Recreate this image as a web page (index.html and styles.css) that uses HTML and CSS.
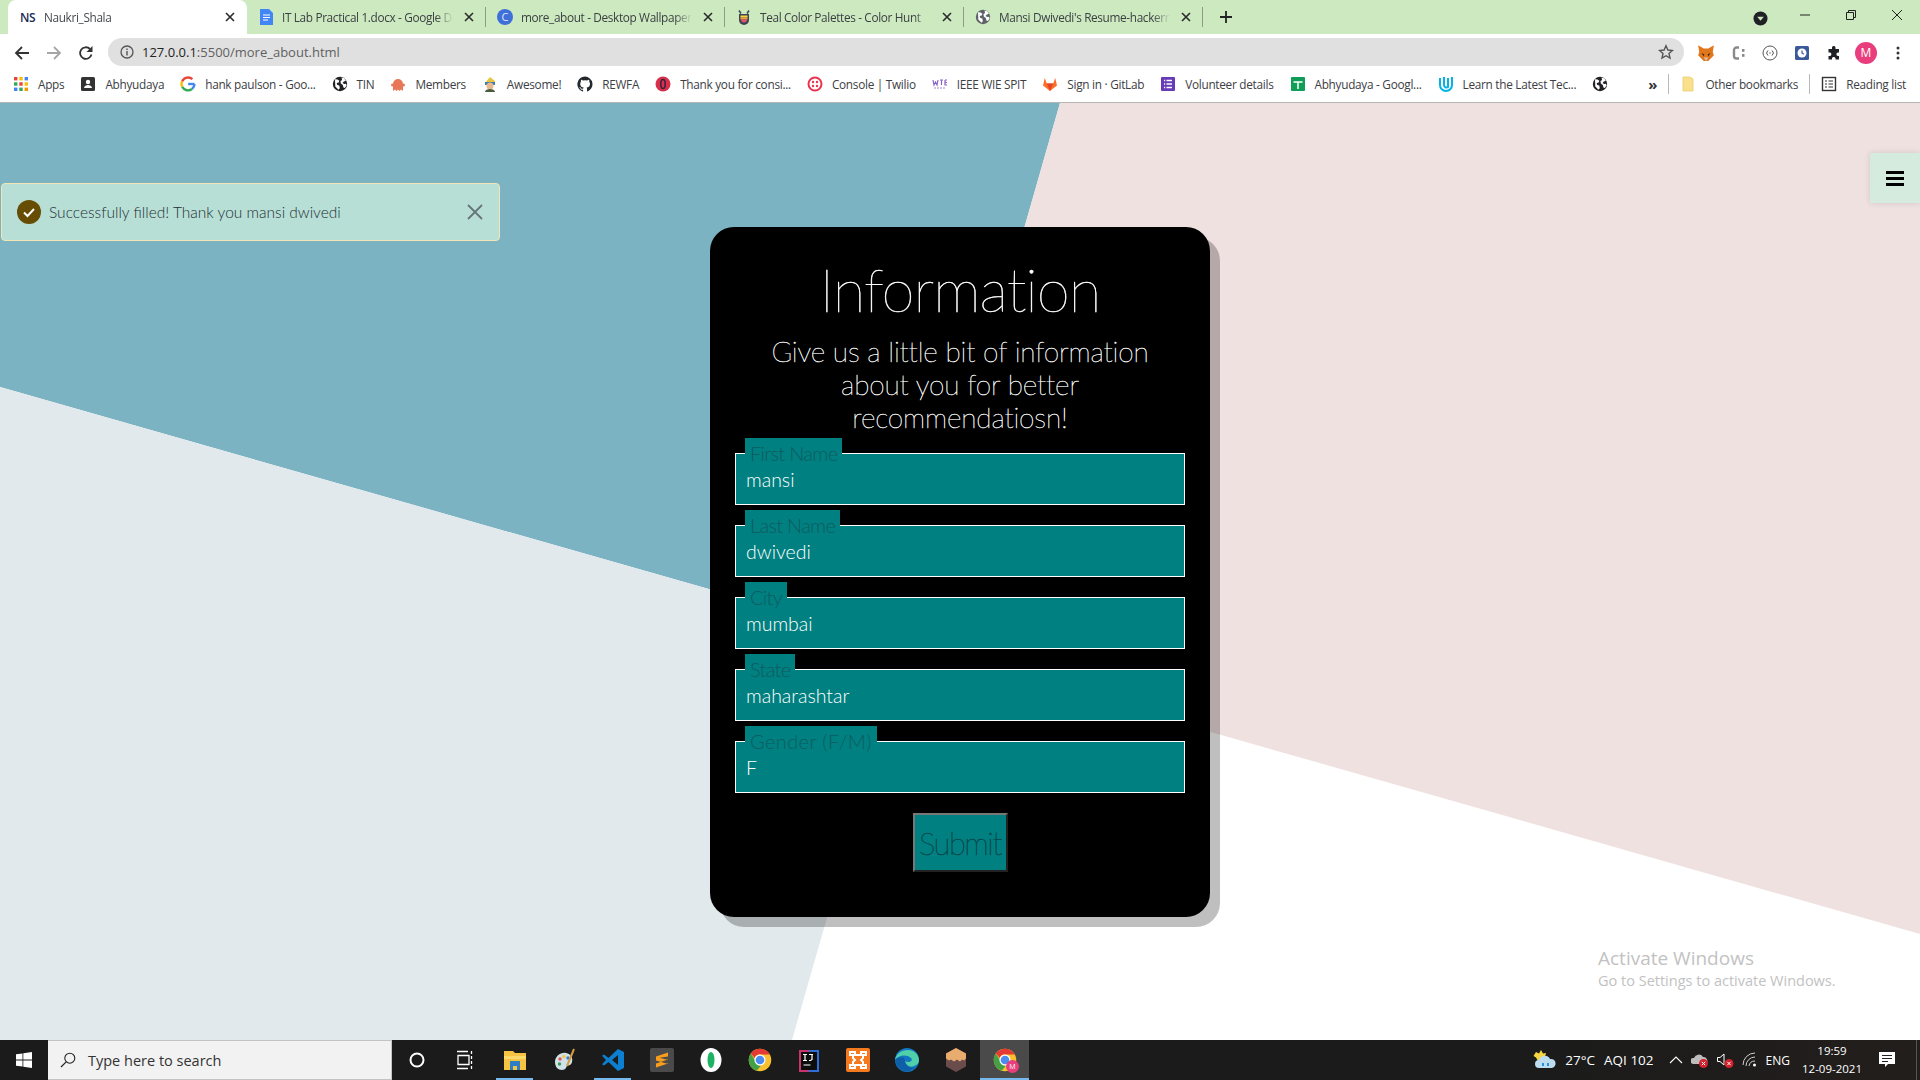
FILE: index.html
```html
<!DOCTYPE html>
<html lang="en">
<head>
  <meta charset="UTF-8">
  <meta name="viewport" content="width=device-width, initial-scale=1.0">
  <title>Naukri_Shala</title>
  <link rel="stylesheet" href="styles.css">
</head>
<body>
  <!-- shared icons -->
  <svg class="sprite" aria-hidden="true">
    <symbol id="i-close" viewBox="0 0 16 16"><path d="M4 4l8 8M12 4l-8 8" fill="none" stroke="currentColor" stroke-width="1.6"/></symbol>
    <symbol id="i-globe" viewBox="0 0 16 16"><circle cx="8" cy="8" r="7.2" fill="currentColor"/><path d="M3 3.2l2.6.3 1.7 1.3-.6 1.7-2 .6.6 2 2 .5.5 2.6-1.3 1.6-3.2-3.4zM9.5 1.6l2.6.6 1.8 2.6-2 .6-1.4 1.5 1.8 1.2 1.8-.3.5 1.6-1.7 2.6-1.5-.4-.6-2.5-2-1.7-.3-2.4 1.6-1z" fill="#fff"/></symbol>
    <symbol id="i-chrome" viewBox="0 0 32 32">
      <circle cx="16" cy="16" r="15" fill="#fbc02d"/>
      <path d="M16 1a15 15 0 0 1 13 7.5H16a7.5 7.5 0 0 0-7 4.7L3.900 7.200A15 15 0 0 1 16 1z" fill="#e53935"/>
      <path d="M1 16a15 15 0 0 1 2.900-8.800L10 17.500a7.500 7.500 0 0 0 7.200 6L11.500 30.300A15 15 0 0 1 1 16z" fill="#43a047"/>
      <circle cx="16" cy="16" r="7.400" fill="#fff"/><circle cx="16" cy="16" r="5.800" fill="#4a8cf0"/>
    </symbol>
  </svg>

  <div class="chrome">
    <div class="tabstrip">
      <div class="tab tab-active">
        <span class="fav-ns">NS</span>
        <span class="tab-title">Naukri_Shala</span>
        <svg class="tab-close"><use href="#i-close"/></svg>
      </div>
      <div class="tab">
        <svg class="fav" viewBox="0 0 16 16"><path d="M2 0h9l4 4v12H2z" fill="#4285f4"/><path d="M5 6h7M5 8.500h7M5 11h5" stroke="#fff" stroke-width="1.200"/></svg>
        <span class="tab-title">IT Lab Practical 1.docx - Google Docs</span>
        <svg class="tab-close"><use href="#i-close"/></svg>
      </div>
      <div class="tab">
        <span class="fav-canva">C</span>
        <span class="tab-title">more_about - Desktop Wallpaper</span>
        <svg class="tab-close"><use href="#i-close"/></svg>
      </div>
      <div class="tab">
        <svg class="fav" viewBox="0 0 16 16"><path d="M3 5h10v6a5 5 0 0 1-10 0z" fill="#3d4450"/><path d="M4.500 6.500h7v2h-7z" fill="#f6d743"/><path d="M4.500 8.500h7v2h-7z" fill="#f59a3c"/><path d="M5 10.500h6a3 3 0 0 1-6 0z" fill="#e0566f"/><path d="M3 1.500l2 3M13 1.500l-2 3" stroke="#3d4450" stroke-width="1.500"/></svg>
        <span class="tab-title">Teal Color Palettes - Color Hunt</span>
        <svg class="tab-close"><use href="#i-close"/></svg>
      </div>
      <div class="tab">
        <svg class="fav fav-gray"><use href="#i-globe"/></svg>
        <span class="tab-title">Mansi Dwivedi's Resume-hackerrank</span>
        <svg class="tab-close"><use href="#i-close"/></svg>
      </div>
      <svg class="new-tab" viewBox="0 0 14 14"><path d="M7 1v12M1 7h12" stroke="#222" stroke-width="1.800"/></svg>
      <div class="win-controls">
        <svg class="tab-search" viewBox="0 0 16 16"><circle cx="8" cy="8" r="7.500" fill="#202124"/><path d="M4.500 6h7L8 10.500z" fill="#cde9c0"/></svg>
        <svg class="win-btn" viewBox="0 0 12 12"><path d="M1 6h10" stroke="#222"/></svg>
        <svg class="win-btn" viewBox="0 0 12 12"><path d="M1.500 3.500h7v7h-7zM3.500 3.500v-2h7v7h-2" fill="none" stroke="#222"/></svg>
        <svg class="win-btn" viewBox="0 0 12 12"><path d="M1 1l10 10M11 1L1 11" stroke="#222"/></svg>
      </div>
    </div>

    <div class="toolbar">
      <svg class="nav-icon" viewBox="0 0 16 16"><path d="M15 8H2M8 2L2 8l6 6" fill="none" stroke="#333" stroke-width="1.800"/></svg>
      <svg class="nav-icon" viewBox="0 0 16 16"><path d="M1 8h13M8 2l6 6-6 6" fill="none" stroke="#a6a6a6" stroke-width="1.800"/></svg>
      <svg class="nav-icon" viewBox="0 0 16 16"><path d="M13.500 9.500A5.800 5.800 0 1 1 12 4" fill="none" stroke="#333" stroke-width="1.800"/><path d="M14.500 1v6h-6z" fill="#333"/></svg>
      <div class="omnibox">
        <svg class="info-icon" viewBox="0 0 14 14"><circle cx="7" cy="7" r="6" fill="none" stroke="#555" stroke-width="1.300"/><path d="M7 6v4.500M7 3.500v1.500" stroke="#555" stroke-width="1.400"/></svg>
        <span class="url"><b>127.0.0.1</b>:5500/more_about.html</span>
        <svg class="star" viewBox="0 0 16 16"><path d="M8 1.800l1.900 4.200 4.500.5-3.400 3 1 4.500L8 11.700 4 14l1-4.500-3.400-3 4.500-.5z" fill="none" stroke="#555" stroke-width="1.400"/></svg>
      </div>
      <div class="extensions">
        <svg class="ext ext-fox" viewBox="0 0 16 16"><path d="M1 1l5 3h4l5-3-1 6 1 3-3 3-2 2H6l-2-2-3-3 1-3z" fill="#e2761b"/><path d="M4 8l2.500 1L6 11zM12 8L9.500 9l.5 2z" fill="#3d2b1f"/><path d="M6 12h4l-2 3z" fill="#d7c1b3"/></svg>
        <svg class="ext" viewBox="0 0 16 16"><path d="M9 2.500H6.500a2.500 2.500 0 0 0-2.500 2.500v6a2.500 2.500 0 0 0 2.500 2.500H9" fill="none" stroke="#8a8a8a" stroke-width="2.400"/><rect x="12" y="4" width="2.500" height="2.800" fill="#8a8a8a"/><rect x="12" y="9" width="2.500" height="2.800" fill="#8a8a8a"/></svg>
        <svg class="ext" viewBox="0 0 16 16"><circle cx="8" cy="8" r="7" fill="none" stroke="#555"/><path d="M6 5.500L4.500 8 6 10.500M10 5.500L11.500 8 10 10.500" fill="none" stroke="#555"/><circle cx="8" cy="8" r=".7" fill="#555"/></svg>
        <svg class="ext" viewBox="0 0 16 16"><rect x="1" y="1" width="14" height="14" rx="1.500" fill="#3b5a9a"/><circle cx="8" cy="8" r="4.500" fill="#fff"/><path d="M8 5.500V8l1.800 1.200" fill="none" stroke="#3b5a9a" stroke-width="1.200"/></svg>
        <svg class="ext" viewBox="0 0 16 16"><path d="M6 2.500a1.800 1.800 0 0 1 3.500 0V4H13v3.500h-1.200a1.800 1.800 0 0 0 0 3.500H13v3.500H9.500v-1.200a1.800 1.800 0 0 0-3.500 0v1.200H2.500V11H4a1.800 1.800 0 0 0 0-3.500H2.500V4H6z" fill="#202124"/></svg>
        <span class="avatar">M</span>
        <svg class="ext ext-more" viewBox="0 0 16 16"><circle cx="8" cy="3" r="1.500" fill="#333"/><circle cx="8" cy="8" r="1.500" fill="#333"/><circle cx="8" cy="13" r="1.500" fill="#333"/></svg>
      </div>
    </div>

    <div class="bookmarks">
      <a class="bm bm-apps"><svg class="bm-icon" viewBox="0 0 16 16"><g><rect x="1" y="1" width="3.400" height="3.400" fill="#ea4335"/><rect x="6.300" y="1" width="3.400" height="3.400" fill="#fbbc04"/><rect x="11.600" y="1" width="3.400" height="3.400" fill="#4285f4"/><rect x="1" y="6.300" width="3.400" height="3.400" fill="#34a853"/><rect x="6.300" y="6.300" width="3.400" height="3.400" fill="#ea4335"/><rect x="11.600" y="6.300" width="3.400" height="3.400" fill="#fbbc04"/><rect x="1" y="11.600" width="3.400" height="3.400" fill="#4285f4"/><rect x="6.300" y="11.600" width="3.400" height="3.400" fill="#34a853"/><rect x="11.600" y="11.600" width="3.400" height="3.400" fill="#f29900"/></g></svg>Apps</a>
      <a class="bm"><svg class="bm-icon" viewBox="0 0 16 16"><rect x="1" y="1" width="14" height="14" rx="1.500" fill="#333"/><circle cx="8" cy="6" r="2.200" fill="#fff"/><path d="M4 12c.5-4 7.500-4 8 0z" fill="#fff"/></svg>Abhyudaya</a>
      <a class="bm"><svg class="bm-icon" viewBox="0 0 16 16"><path d="M14.500 8H8.200" stroke="#4285f4" stroke-width="2.400" fill="none"/><path d="M14.500 8a6.500 6.500 0 0 1-2.500 5" stroke="#4285f4" stroke-width="2.400" fill="none"/><path d="M12 13a6.500 6.500 0 0 1-9.800-2.200" stroke="#34a853" stroke-width="2.400" fill="none"/><path d="M2.200 10.800a6.500 6.500 0 0 1 0-5.600" stroke="#fbbc04" stroke-width="2.400" fill="none"/><path d="M2.200 5.200A6.500 6.500 0 0 1 12.400 3.200" stroke="#ea4335" stroke-width="2.400" fill="none"/></svg>hank paulson - Goo...</a>
      <a class="bm"><svg class="bm-icon bm-dark"><use href="#i-globe"/></svg>TIN</a>
      <a class="bm"><svg class="bm-icon" viewBox="0 0 16 16"><path d="M3 15V8a5 5 0 0 1 10 0v7l-2-1.500L9.500 15 8 13.500 6.500 15 5 13.500z" fill="#e8775a"/><circle cx="2.500" cy="9" r="1.500" fill="#e8775a"/><circle cx="13.500" cy="9" r="1.500" fill="#e8775a"/></svg>Members</a>
      <a class="bm"><svg class="bm-icon" viewBox="0 0 16 16"><path d="M3 7l5-6 5 4v3H3z" fill="#e7c53c"/><rect x="3" y="6" width="10" height="3" fill="#3d7fb5"/><circle cx="8" cy="10" r="3.500" fill="#e7b98c"/><path d="M3 16c0-4 10-4 10 0z" fill="#4b5a3a"/></svg>Awesome!</a>
      <a class="bm"><svg class="bm-icon" viewBox="0 0 16 16"><path d="M8 .5a7.700 7.700 0 0 0-2.400 15c.4.100.5-.2.500-.4v-1.400c-2.100.500-2.600-1-2.600-1-.4-.900-.9-1.100-.9-1.100-.7-.500.100-.500.100-.500.800.100 1.200.800 1.200.800.700 1.200 1.800.900 2.300.700.100-.5.300-.9.500-1.100-1.700-.2-3.500-.900-3.500-3.800 0-.800.300-1.500.8-2-.1-.2-.3-1 .1-2 0 0 .6-.2 2.100.8a7.300 7.300 0 0 1 3.800 0c1.500-1 2.100-.8 2.100-.8.400 1 .2 1.800.1 2 .5.500.8 1.200.8 2 0 2.900-1.800 3.600-3.500 3.800.3.200.5.700.5 1.400v2.100c0 .2.100.500.500.400A7.700 7.700 0 0 0 8 .5z" fill="#24292e"/></svg>REWFA</a>
      <a class="bm"><svg class="bm-icon" viewBox="0 0 16 16"><circle cx="8" cy="8" r="7.500" fill="#d8304a"/><ellipse cx="8" cy="8" rx="2.200" ry="4.500" fill="none" stroke="#3a2340" stroke-width="1.600"/></svg>Thank you for consi...</a>
      <a class="bm"><svg class="bm-icon" viewBox="0 0 16 16"><circle cx="8" cy="8" r="6.500" fill="none" stroke="#e8344e" stroke-width="2"/><circle cx="6" cy="6" r="1.200" fill="#e8344e"/><circle cx="10" cy="6" r="1.200" fill="#e8344e"/><circle cx="6" cy="10" r="1.200" fill="#e8344e"/><circle cx="10" cy="10" r="1.200" fill="#e8344e"/></svg>Console | Twilio</a>
      <a class="bm"><svg class="bm-icon" viewBox="0 0 16 16"><path d="M1 4l1 5 1.500-3L5 9l1-5M8 4h3M9.500 4v5M13 4v5h2M13 6.500h2M13 4h2" fill="none" stroke="#8a63c9" stroke-width="1.200"/><path d="M2 12h12" stroke="#c5b3e3" stroke-width="1.500" stroke-dasharray="2 1"/></svg>IEEE WIE SPIT</a>
      <a class="bm"><svg class="bm-icon" viewBox="0 0 16 16"><path d="M8 15L1 9.500 2.800 2l2 5.500h6.400l2-5.500L15 9.500z" fill="#fc6d26"/><path d="M8 15L4.800 7.500h6.400z" fill="#e24329"/></svg>Sign in · GitLab</a>
      <a class="bm"><svg class="bm-icon" viewBox="0 0 16 16"><rect x="1" y="1" width="14" height="14" rx="1" fill="#673ab7"/><path d="M6.500 4.500h5.500M6.500 8h5.500M6.500 11.500h5.500M4 4.500h1.200M4 8h1.200M4 11.500h1.200" stroke="#fff" stroke-width="1.300"/></svg>Volunteer details</a>
      <a class="bm"><svg class="bm-icon" viewBox="0 0 16 16"><rect x="1" y="1" width="14" height="14" rx="1" fill="#0f9d58"/><path d="M3.500 6h9M8 6v7" stroke="#fff" stroke-width="1.500"/></svg>Abhyudaya - Googl...</a>
      <a class="bm"><svg class="bm-icon" viewBox="0 0 16 16"><path d="M2 2v7a6 6 0 0 0 12 0V1" fill="none" stroke="#02b3e4" stroke-width="2"/><path d="M6 1v8a2.500 2.500 0 0 0 4 2V2" fill="none" stroke="#02b3e4" stroke-width="2"/></svg>Learn the Latest Tec...</a>
      <a class="bm bm-globe"><svg class="bm-icon bm-dark"><use href="#i-globe"/></svg></a>
      <span class="bm-more">»</span>
      <i class="bm-sep"></i>
      <a class="bm bm-other"><svg class="bm-icon" viewBox="0 0 16 16"><path d="M3 1h7l3 2v12H3z" fill="#fbe08c" stroke="#e8c766" stroke-width=".7"/></svg>Other bookmarks</a>
      <i class="bm-sep"></i>
      <a class="bm bm-reading"><svg class="bm-icon" viewBox="0 0 16 16"><rect x="1.500" y="1.500" width="13" height="13" fill="none" stroke="#333" stroke-width="1.400"/><path d="M4 5h2M7.500 5H12M4 8h2M7.500 8H12M4 11h2M7.500 11H12" stroke="#333" stroke-width="1.200"/></svg>Reading list</a>
    </div>
  </div>

  <main class="page">
    <svg class="backdrop" viewBox="0 0 1920 937" preserveAspectRatio="none" aria-hidden="true">
      <polygon points="0,0 1060,0 905,542 0,284" fill="#7cb3c3"/>
      <polygon points="1060,0 1920,0 1920,831 905,542" fill="#f0e1e1"/>
      <polygon points="0,284 905,542 792,937 0,937" fill="#e2e9ec"/>
    </svg>

    <div class="toast">
      <svg class="toast-check" viewBox="0 0 24 24"><circle cx="12" cy="12" r="12" fill="#664d03"/><path d="M7 12.500l3.500 3.500L17 9" fill="none" stroke="#fff" stroke-width="2"/></svg>
      <span class="toast-text">Successfully filled! Thank you mansi dwivedi</span>
      <svg class="toast-close" viewBox="0 0 16 16"><path d="M1 1l14 14M15 1L1 15" stroke="#66757a" stroke-width="1.800"/></svg>
    </div>

    <button class="menu-btn" aria-label="Menu"><span></span><span></span><span></span></button>

    <section class="card">
      <h1>Information</h1>
      <h2>Give us a little bit of information about you for better recommendatiosn!</h2>
      <form>
        <fieldset><legend>First Name</legend><input type="text" value="mansi"></fieldset>
        <fieldset><legend>Last Name</legend><input type="text" value="dwivedi"></fieldset>
        <fieldset><legend>City</legend><input type="text" value="mumbai"></fieldset>
        <fieldset><legend>State</legend><input type="text" value="maharashtar"></fieldset>
        <fieldset><legend class="legend-wide">Gender (F/M)</legend><input type="text" value="F"></fieldset>
        <button class="submit" type="button">Submit</button>
      </form>
    </section>

    <div class="activate">
      <div class="activate-title">Activate Windows</div>
      <div class="activate-sub">Go to Settings to activate Windows.</div>
    </div>
  </main>

  <footer class="taskbar">
    <div class="start"><svg viewBox="0 0 16 16" width="16" height="16"><path d="M0 2.300l6.500-.9v6.200H0zM7.300 1.300L16 0v7.600H7.300zM0 8.400h6.500v6.200L0 13.700zM7.300 8.400H16V16l-8.700-1.300z" fill="#fff"/></svg></div>
    <div class="search">
      <svg viewBox="0 0 16 16" width="16" height="16"><circle cx="9.800" cy="6.200" r="5" fill="none" stroke="#222" stroke-width="1.100"/><path d="M6.200 9.800L1 15" stroke="#222" stroke-width="1.200"/></svg>
      <span>Type here to search</span>
    </div>
    <div class="task-icons">
      <div class="task"><svg viewBox="0 0 24 24"><circle cx="12" cy="12" r="6.500" fill="none" stroke="#fff" stroke-width="2"/></svg></div>
      <div class="task"><svg viewBox="0 0 24 24"><path d="M3 3.500h11M3 20.500h11M4 7.500h11v9H4zM17.500 3v3M17.500 8v3M17.500 13v3M17.500 18v3" fill="none" stroke="#fff" stroke-width="1.300"/></svg></div>
      <div class="task task-run"><svg viewBox="0 0 24 24"><path d="M1 3h9l2 2h11v17H1z" fill="#f6c343"/><path d="M1 8h22v3H1z" fill="#fbd96b"/><path d="M7 13h10v9h-3v-4h-4v4H7z" fill="#2c7fc4"/></svg></div>
      <div class="task"><svg viewBox="0 0 24 24"><path d="M3 14c0-6 6-10 11-9 5 1 7 5 6 9s-4 3-5 4-1 4-5 4-7-3-7-8z" fill="#cfe3ea"/><circle cx="8" cy="11" r="1.700" fill="#e8534a"/><circle cx="12" cy="8.500" r="1.700" fill="#f6c343"/><circle cx="7.500" cy="16" r="1.700" fill="#3a9a5a"/><circle cx="16" cy="10" r="1.700" fill="#3a7fd0"/><path d="M22 1l-7 17" stroke="#d69a45" stroke-width="2"/></svg></div>
      <div class="task task-run"><svg viewBox="0 0 24 24"><path d="M17 1l6 3v16l-6 3L7.500 14 3 17.500 1 16.200 5 12 1 7.800 3 6.500 7.500 10z" fill="#0d7fd1"/><path d="M17 7l-6 5 6 5z" fill="#1c1c1c"/></svg></div>
      <div class="task"><svg viewBox="0 0 24 24"><rect width="24" height="24" rx="2" fill="#4a4a4a"/><path d="M18 4.500L6 8.500v4l12 3.500v-4L9.500 9.700 18 8.500zM6 15.500l12-4v4l-12 4z" fill="#f89d1c"/></svg></div>
      <div class="task"><svg viewBox="0 0 24 24"><ellipse cx="12" cy="12" rx="10.500" ry="12" fill="#fff"/><ellipse cx="12" cy="12" rx="3.500" ry="8" fill="#1eb264"/></svg></div>
      <div class="task"><svg><use href="#i-chrome"/></svg></div>
      <div class="task"><svg viewBox="0 0 24 24"><rect x="2" y="2" width="20" height="24" fill="#2c6fd8"/><rect x="2" y="2" width="10" height="24" fill="#c7356f"/><rect x="4" y="4" width="16" height="18" fill="#0d0d0d"/><path d="M6 6.500h4M8 6.500v6M6 12.500h4M12 6.500h4M15 6.500v5l-1.500 1H12M6.500 17h7" fill="none" stroke="#fff" stroke-width="1.200"/></svg></div>
      <div class="task"><svg viewBox="0 0 24 24"><rect width="24" height="24" rx="2" fill="#f5791f"/><path d="M7 7h10v3l-2 2 2 2v3H7v-3l2-2-2-2zM4 4h5v3H4zM15 4h5v3h-5zM4 17h5v3H4zM15 17h5v3h-5z" fill="none" stroke="#fff" stroke-width="2"/></svg></div>
      <div class="task"><svg viewBox="0 0 24 24"><circle cx="12" cy="12" r="12" fill="#1276c4"/><path d="M24 13C24 6 19 2 13 2 6 2 1 6 0 12c3-5 12-6 16-2 2 2 0 4-3 4-2 0-3-1-3-2 0 5 5 8 9 6 3-1 5-3 5-5z" fill="#4fd0a8"/><path d="M10 12c0 5 4 9 10 7-3 3-7 5-10 4-6-1-9-6-10-11 3-3 9-4 10 0z" fill="#0f5fa8"/></svg></div>
      <div class="task"><svg viewBox="0 0 24 24"><path d="M12 0l10 5.500v13L12 24 2 18.500v-13z" fill="#6a4c4c"/><path d="M12 0l10 5.500v5l-2 2-2-1-2 2-3-2-3 2-3-2-2 1-3-2v-5z" fill="#e8ad6e"/></svg></div>
      <div class="task task-active"><svg><use href="#i-chrome"/></svg><span class="task-badge">M</span></div>
    </div>
    <div class="tray">
      <svg class="tray-weather" viewBox="0 0 24 24"><path d="M3 4l3 1.500L8 2l2 3.500 3-.5-1 4-7 4-2-3.500L.5 8z" fill="#f6d743"/><path d="M6 20a4 4 0 0 1 0-8 6 6 0 0 1 11-1 4.500 4.500 0 0 1 2 9z" fill="#bcdcf0"/><path d="M10 15v3M15 15v3" stroke="#2f8fd6" stroke-width="2"/></svg>
      <span class="tray-temp">27°C</span>
      <span class="tray-aqi">AQI 102</span>
      <svg class="tray-chev" viewBox="0 0 14 8"><path d="M1 7l6-6 6 6" fill="none" stroke="#fff" stroke-width="1.100"/></svg>
      <span class="tray-ic">
        <svg viewBox="0 0 18 18"><path d="M2 13a3 3 0 0 1 1-6 5 5 0 0 1 9-1 4 4 0 0 1 3 7z" fill="#bdbdbd"/><circle cx="12.500" cy="12.500" r="4.500" fill="#d3202d"/><path d="M10.800 10.800l3.400 3.400M14.200 10.800l-3.400 3.400" stroke="#fff"/></svg>
      </span>
      <span class="tray-ic">
        <svg viewBox="0 0 18 18"><path d="M1.500 6.500h2.500L8 3v11L4 10.500H1.500z" fill="none" stroke="#fff"/><circle cx="13" cy="12.500" r="4.500" fill="#d3202d"/><path d="M11.300 10.800l3.400 3.400M14.700 10.800l-3.400 3.400" stroke="#fff"/></svg>
      </span>
      <span class="tray-ic">
        <svg viewBox="0 0 18 18"><path d="M2 14A12 12 0 0 1 14 2M5 15A9 9 0 0 1 14 6M8 15a6 6 0 0 1 6-5" fill="none" stroke="#cfcfcf"/><circle cx="13.500" cy="14" r="1.500" fill="#fff"/></svg>
      </span>
      <span class="tray-lang">ENG</span>
      <div class="clock"><span>19:59</span><span>12-09-2021</span></div>
      <svg class="tray-notify" viewBox="0 0 18 18"><path d="M1 1h16v12h-7l-3 3v-3H1z" fill="#fff"/><path d="M4 4.500h10M4 7.500h10M4 10.500h6" stroke="#222"/></svg>
      <i class="tray-edge"></i>
    </div>
  </footer>
</body>
</html>
```

FILE: styles.css
```css
* {
  box-sizing: border-box;
}
html, body {
  margin: 0;
  height: 100%;
}
body {
  width: 1920px;
  height: 1080px;
  overflow: hidden;
  display: flex;
  flex-direction: column;
  font-family: "Open Sans", "Noto Sans", sans-serif;
  background: #fff;
}
.sprite {
  display: none;
}

/* browser top */
.chrome {
  flex: none;
  height: 103px;
  background: #fff;
  border-bottom: 1px solid #b5b5b5;
}
.tabstrip {
  height: 34px;
  padding-left: 8px;
  background: #cde9c0;
  display: flex;
  align-items: stretch;
}
.tab {
  width: 239px;
  padding: 0 9px 0 11px;
  display: flex;
  align-items: center;
  gap: 8px;
  position: relative;
  font-size: 11.8px;
  color: #3c4043;
}
.tab::after {
  content: "";
  position: absolute;
  right: 0;
  top: 7px;
  height: 20px;
  width: 1px;
  background: #8d9c86;
}
.tab-active {
  background: #fff;
  border-radius: 8px 8px 0 0;
  padding-left: 12px;
  color: #45474d;
}
.tab-active::after {
  display: none;
}
.tab-title {
  flex: 1;
  min-width: 0;
  white-space: nowrap;
  overflow: hidden;
  letter-spacing: -0.35px;
  -webkit-mask-image: linear-gradient(to right, #000 90%, transparent);
  mask-image: linear-gradient(to right, #000 90%, transparent);
}
.tab-close {
  flex: none;
  width: 16px;
  height: 16px;
  color: #2a2a2a;
}
.fav {
  flex: none;
  width: 16px;
  height: 16px;
}
.fav-gray {
  color: #5f6368;
}
.fav-ns {
  flex: none;
  width: 16px;
  font-size: 12px;
  font-weight: 600;
  color: #1c2a56;
  letter-spacing: -0.5px;
}
.fav-canva {
  flex: none;
  width: 16px;
  height: 16px;
  border-radius: 50%;
  background: #3f6fd8;
  color: #dfe9ff;
  font-size: 11px;
  line-height: 16px;
  text-align: center;
}
.new-tab {
  width: 14px;
  height: 14px;
  margin: 10px 0 0 16px;
}
.win-controls {
  margin-left: auto;
  display: flex;
  align-items: center;
}
.tab-search {
  width: 15px;
  height: 15px;
  margin: 2px 31px 0 0;
}
.win-btn {
  width: 12px;
  height: 12px;
  margin-right: 34px;
  margin-top: -5px;
}
.win-btn:last-child {
  margin-right: 17px;
}

.toolbar {
  height: 37px;
  display: flex;
  align-items: center;
  padding-left: 14px;
}
.nav-icon {
  width: 16px;
  height: 16px;
  margin-right: 16px;
}
.omnibox {
  width: 1576px;
  height: 28px;
  margin-left: -2px;
  margin-top: -1px;
  padding: 0 10px 0 12px;
  background: #e0e0e0;
  border-radius: 14px;
  display: flex;
  align-items: center;
  font-size: 13px;
  color: #606060;
}
.info-icon {
  width: 14px;
  height: 14px;
  margin-right: 8px;
}
.url {
  flex: 1;
}
.url b {
  font-weight: 400;
  color: #222;
}
.star {
  width: 16px;
  height: 16px;
}
.extensions {
  display: flex;
  align-items: center;
  margin-left: 14px;
  gap: 16px;
}
.ext {
  width: 16px;
  height: 16px;
}
.ext-fox {
  width: 18px;
  height: 18px;
  margin: 0 -1px;
}
.avatar {
  width: 22px;
  height: 22px;
  margin: 0 -3px;
  border-radius: 50%;
  background: #e83e7d;
  color: #fff;
  font-size: 12px;
  line-height: 22px;
  text-align: center;
}

.bookmarks {
  height: 31px;
  padding: 0 0 6px 13px;
  display: flex;
  align-items: center;
  gap: 16px;
  font-size: 11.8px;
  color: #3c4043;
  white-space: nowrap;
}
.bm {
  display: flex;
  align-items: center;
  gap: 9px;
  letter-spacing: -0.28px;
}
.bm-icon {
  flex: none;
  width: 16px;
  height: 16px;
}
.bm-dark {
  color: #202124;
}
.bm-more {
  margin-left: 24px;
  font-size: 15px;
  font-weight: 700;
  line-height: 16px;
  color: #333;
}
.bm-sep {
  width: 1px;
  height: 20px;
  background: #b9b9b9;
  margin: 0 -5px;
}

/* page */
.page {
  flex: 1;
  position: relative;
  overflow: hidden;
  background: #fff;
}
.backdrop {
  position: absolute;
  inset: 0;
  width: 100%;
  height: 100%;
}
.toast {
  position: absolute;
  left: 1px;
  top: 80px;
  width: 499px;
  height: 58px;
  padding: 0 16px 0 15px;
  display: flex;
  align-items: center;
  background: #b8dfd6;
  border: 1px solid #f3e4b4;
  border-radius: 4px;
  font-family: Lato, sans-serif;
  font-weight: 300;
  font-size: 15.5px;
  color: #1c2f33;
}
.toast-check {
  flex: none;
  width: 24px;
  height: 24px;
  margin-right: 8px;
}
.toast-text {
  flex: 1;
}
.toast-close {
  width: 16px;
  height: 16px;
}
.menu-btn {
  position: absolute;
  right: 0;
  top: 50px;
  width: 50px;
  height: 50px;
  padding: 0 0 0 16px;
  border: none;
  background: #d4ebde;
  box-shadow: 0 0 6px rgba(0, 0, 0, 0.12);
  display: flex;
  flex-direction: column;
  justify-content: center;
  gap: 3px;
}
.menu-btn span {
  width: 18px;
  height: 3px;
  background: #000;
}
.card {
  position: relative;
  width: 500px;
  margin: 124px auto 0;
  padding: 0 25px 45px;
  background: #000;
  border-radius: 24px;
  box-shadow: 10px 10px 0 rgba(0, 0, 0, 0.25);
  color: #fff;
  font-family: Lato, sans-serif;
  font-weight: 100;
  text-align: center;
}
.card h1 {
  margin: 0;
  padding-top: 26px;
  font-size: 60px;
  font-weight: 100;
  line-height: 72px;
  letter-spacing: -1px;
  -webkit-text-stroke: 0.5px #fff;
}
.card h2 {
  margin: 10px 0 0;
  font-size: 28px;
  font-weight: 100;
  line-height: 33px;
  letter-spacing: -0.15px;
  -webkit-text-stroke: 0.4px #fff;
}
.card form {
  margin-top: 4px;
}
.card fieldset {
  margin: 0 0 5px;
  padding: 0;
  background: #008080;
  border: 1px solid #fff;
  min-width: 0;
}
.card legend {
  margin-left: 9px;
  padding: 0 5px;
  height: 30px;
  background: #008080;
  color: #0d5c61;
  font-size: 20px;
  font-weight: 300;
  line-height: 30px;
  letter-spacing: -0.7px;
  text-align: left;
}
.card .legend-wide {
  letter-spacing: 0.4px;
}
.card input {
  display: block;
  width: 100%;
  height: 36px;
  padding: 0 10px 14px;
  background: transparent;
  border: none;
  outline: none;
  color: #fff;
  font-family: Lato, sans-serif;
  font-weight: 300;
  font-size: 19.5px;
}
.submit {
  display: block;
  width: 95px;
  height: 59px;
  margin: 20px auto 0;
  padding: 0;
  background: #008080;
  border: 2px outset #777;
  color: #08444a;
  font-family: Lato, sans-serif;
  font-weight: 100;
  font-size: 31px;
  letter-spacing: -1.5px;
  -webkit-text-stroke: 0.5px #08444a;
}
.activate {
  position: absolute;
  left: 1598px;
  top: 843px;
  color: #c2c2c2;
  font-family: "Open Sans", sans-serif;
}
.activate-title {
  font-size: 19px;
  line-height: 25px;
}
.activate-sub {
  font-size: 14.5px;
  line-height: 19px;
}

/* windows taskbar */
.taskbar {
  flex: none;
  height: 40px;
  background: #1b1b1b;
  display: flex;
  align-items: stretch;
  color: #fff;
}
.start {
  width: 48px;
  display: flex;
  align-items: center;
  justify-content: center;
}
.search {
  width: 344px;
  padding-left: 12px;
  display: flex;
  align-items: center;
  gap: 12px;
  background: #f2f2f2;
  border: 1px solid #c4c4c4;
  border-width: 1px 1px 1px 0;
  color: #333;
  font-size: 14.5px;
}
.task-icons {
  display: flex;
}
.task {
  width: 49px;
  position: relative;
  display: flex;
  align-items: center;
  justify-content: center;
}
.task svg {
  width: 24px;
  height: 24px;
}
.task-run::after, .task-active::after {
  content: "";
  position: absolute;
  left: 6px;
  right: 6px;
  bottom: 0;
  height: 2px;
  background: #76b9ed;
}
.task-active {
  background: #4a4a4a;
}
.task-active::after {
  left: 0;
  right: 0;
}
.task-badge {
  position: absolute;
  left: 26px;
  top: 20px;
  width: 13px;
  height: 13px;
  border-radius: 50%;
  background: #e83e7d;
  color: #fff;
  font-size: 7px;
  line-height: 13px;
  text-align: center;
}
.tray {
  margin-left: auto;
  display: flex;
  align-items: center;
  position: relative;
  font-size: 13.5px;
  background: linear-gradient(to right, #1b1b1b, #221e1c);
  padding-left: 30px;
}
.tray-weather {
  width: 24px;
  height: 24px;
  margin-right: 8px;
}
.tray-temp {
  margin-right: 9px;
}
.tray-aqi {
  margin-right: 15px;
}
.tray-chev {
  width: 14px;
  height: 8px;
  margin-right: 8px;
}
.tray-ic {
  width: 18px;
  height: 18px;
  margin-right: 7px;
  display: flex;
}
.tray-lang {
  font-size: 12px;
  margin: 0 9px 0 0;
}
.clock {
  width: 66px;
  display: flex;
  flex-direction: column;
  align-items: center;
  font-size: 11.5px;
  line-height: 18px;
}
.tray-notify {
  width: 18px;
  height: 18px;
  margin: 0 24px 0 13px;
}
.tray-edge {
  position: absolute;
  right: 3px;
  top: 0;
  bottom: 0;
  width: 1px;
  background: #555;
}
```
